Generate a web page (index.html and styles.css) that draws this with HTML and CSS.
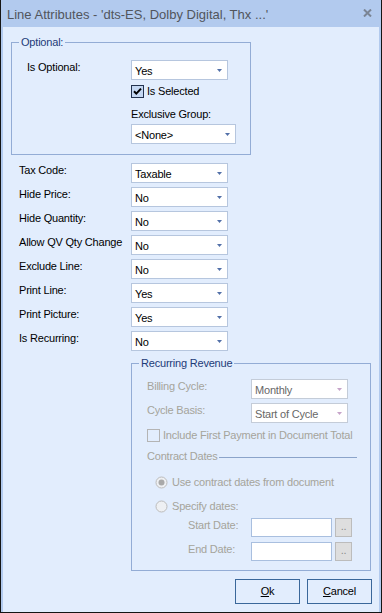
FILE: index.html
```html
<!DOCTYPE html>
<html>
<head>
<meta charset="utf-8">
<link rel="stylesheet" href="styles.css">
</head>
<body>
<div class="window">
  <div class="titlebar">
    <span class="title">Line Attributes - 'dts-ES, Dolby Digital, Thx ...'</span>
    <svg class="close" width="9" height="8" viewBox="0 0 9 8"><path d="M1 0.5 L8 7.5 M8 0.5 L1 7.5" stroke="#7a8494" stroke-width="2" fill="none"/></svg>
  </div>
  <div class="client">
    <fieldset class="group opt">
      <legend>Optional:</legend>
      <div class="opt-body">
        <div class="lbl">Is Optional:</div>
        <div class="stack">
          <div class="combo"><span>Yes</span><svg class="arrow" width="5" height="3" viewBox="0 0 5 3"><path d="M0 0 H5 L2.5 3 Z" fill="#5270a8"/></svg></div>
          <div class="check">
            <svg class="cbox" width="13" height="13" viewBox="0 0 13 13"><rect x="0.5" y="0.5" width="12" height="12" fill="#c5d8f3" stroke="#22324f"/><path d="M3 6.2 L5.3 8.6 L10 3.6" stroke="#000" stroke-width="2" fill="none"/></svg>
            <span>Is Selected</span>
          </div>
          <div class="sublbl">Exclusive Group:</div>
          <div class="combo wide"><span>&lt;None&gt;</span><svg class="arrow" width="5" height="3" viewBox="0 0 5 3"><path d="M0 0 H5 L2.5 3 Z" fill="#5270a8"/></svg></div>
        </div>
      </div>
    </fieldset>

    <div class="rows">
      <div class="row"><div class="lbl main">Tax Code:</div><div class="combo"><span>Taxable</span><svg class="arrow" width="5" height="3" viewBox="0 0 5 3"><path d="M0 0 H5 L2.5 3 Z" fill="#5270a8"/></svg></div></div>
      <div class="row"><div class="lbl main">Hide Price:</div><div class="combo"><span>No</span><svg class="arrow" width="5" height="3" viewBox="0 0 5 3"><path d="M0 0 H5 L2.5 3 Z" fill="#5270a8"/></svg></div></div>
      <div class="row"><div class="lbl main">Hide Quantity:</div><div class="combo"><span>No</span><svg class="arrow" width="5" height="3" viewBox="0 0 5 3"><path d="M0 0 H5 L2.5 3 Z" fill="#5270a8"/></svg></div></div>
      <div class="row"><div class="lbl main">Allow QV Qty Change</div><div class="combo"><span>No</span><svg class="arrow" width="5" height="3" viewBox="0 0 5 3"><path d="M0 0 H5 L2.5 3 Z" fill="#5270a8"/></svg></div></div>
      <div class="row"><div class="lbl main">Exclude Line:</div><div class="combo"><span>No</span><svg class="arrow" width="5" height="3" viewBox="0 0 5 3"><path d="M0 0 H5 L2.5 3 Z" fill="#5270a8"/></svg></div></div>
      <div class="row"><div class="lbl main">Print Line:</div><div class="combo"><span>Yes</span><svg class="arrow" width="5" height="3" viewBox="0 0 5 3"><path d="M0 0 H5 L2.5 3 Z" fill="#5270a8"/></svg></div></div>
      <div class="row"><div class="lbl main">Print Picture:</div><div class="combo"><span>Yes</span><svg class="arrow" width="5" height="3" viewBox="0 0 5 3"><path d="M0 0 H5 L2.5 3 Z" fill="#5270a8"/></svg></div></div>
      <div class="row"><div class="lbl main">Is Recurring:</div><div class="combo"><span>No</span><svg class="arrow" width="5" height="3" viewBox="0 0 5 3"><path d="M0 0 H5 L2.5 3 Z" fill="#5270a8"/></svg></div></div>
    </div>

    <fieldset class="group rec">
      <legend>Recurring Revenue</legend>
      <div class="rec-body">
        <div class="row"><div class="lbl dis">Billing Cycle:</div><div class="combo disabled"><span>Monthly</span><svg class="arrow" width="5" height="3" viewBox="0 0 5 3"><path d="M0 0 H5 L2.5 3 Z" fill="#c6a4c9"/></svg></div></div>
        <div class="row"><div class="lbl dis">Cycle Basis:</div><div class="combo disabled"><span>Start of Cycle</span><svg class="arrow" width="5" height="3" viewBox="0 0 5 3"><path d="M0 0 H5 L2.5 3 Z" fill="#c6a4c9"/></svg></div></div>
        <div class="check dis incl">
          <svg class="cbox" width="13" height="13" viewBox="0 0 13 13"><rect x="0.5" y="0.5" width="12" height="12" fill="none" stroke="#b4b4b4"/></svg>
          <span>Include First Payment in Document Total</span>
        </div>
        <div class="sep"><span class="dis">Contract Dates</span><div class="sepline"></div></div>
        <div class="radio r1">
          <svg width="13" height="13" viewBox="0 0 13 13"><circle cx="6.5" cy="6.5" r="5.5" fill="#eef0f3" stroke="#bcbcbc"/><circle cx="6.5" cy="6.5" r="3" fill="#a9a9a9"/></svg>
          <span class="dis">Use contract dates from document</span>
        </div>
        <div class="radio r2">
          <svg width="13" height="13" viewBox="0 0 13 13"><circle cx="6.5" cy="6.5" r="5.5" fill="#eef0f3" stroke="#bcbcbc"/></svg>
          <span class="dis">Specify dates:</span>
        </div>
        <div class="daterow"><div class="dlbl dis">Start Date:</div><div class="tbox"></div><div class="dots">..</div></div>
        <div class="daterow"><div class="dlbl dis">End Date:</div><div class="tbox"></div><div class="dots">..</div></div>
      </div>
    </fieldset>

    <div class="buttons">
      <div class="btn"><u>O</u>k</div>
      <div class="btn"><u>C</u>ancel</div>
    </div>
  </div>
</div>
</body>
</html>
```

FILE: styles.css
```css
html, body {
  margin: 0;
  padding: 0;
  background: #ffffff;
}
body {
  font-family: "Liberation Sans", Arial, sans-serif;
  font-size: 11px;
  letter-spacing: -0.2px;
  color: #000;
}
.window {
  width: 382px;
  height: 613px;
  box-sizing: border-box;
  border: 1px solid #151515;
  border-top: none;
  background: #b2caee;
  display: flex;
  flex-direction: column;
}
.titlebar {
  height: 27px;
  flex: none;
  box-sizing: border-box;
  padding: 2px 0 0 6px;
  display: flex;
  align-items: flex-start;
}
.title {
  font-size: 13px;
  line-height: 25px;
  letter-spacing: 0;
  color: #51555c;
}
.close {
  margin-left: auto;
  margin-right: 9px;
  margin-top: 7px;
}
.client {
  flex: 1;
  margin: 0 2px;
  background: #e2edfd;
  padding: 9px 0 0 8px;
}
.group {
  margin: 0;
  width: 240px;
  box-sizing: border-box;
  border: 1px solid #93acd5;
  padding: 0;
  min-width: 0;
}
.group legend {
  margin-left: 7px;
  padding: 0 2px;
  line-height: 13px;
  color: #1d3b78;
}
.opt {
  padding: 11px 0 10px 0;
}
.opt-body {
  display: flex;
  align-items: flex-start;
  margin-left: 15px;
}
.lbl {
  width: 104px;
  flex: none;
  line-height: 13px;
  padding-top: 1px;
  white-space: nowrap;
}
.lbl.main {
  width: 112px;
}
.stack {
  display: flex;
  flex-direction: column;
  align-items: flex-start;
}
.combo {
  box-sizing: border-box;
  width: 97px;
  height: 20px;
  border: 1px solid #b6c6de;
  background: #fff;
  padding: 4px 5px 0 3px;
  line-height: 13px;
  display: flex;
  justify-content: space-between;
  align-items: flex-start;
  flex: none;
}
.combo.wide {
  width: 105px;
}
.combo .arrow {
  margin-top: 4px;
}
.combo.disabled {
  border-color: #c4ccd8;
  color: #676767;
}
.check {
  display: flex;
  align-items: flex-start;
  margin-top: 5px;
  line-height: 13px;
}
.check .cbox {
  margin-right: 3px;
  flex: none;
}
.sublbl {
  margin-top: 10px;
  line-height: 13px;
}
.opt .stack .combo.wide {
  margin-top: 3px;
}
.rows {
  margin-top: 8px;
  padding-left: 8px;
  display: flex;
  flex-direction: column;
  gap: 4px;
}
.row {
  display: flex;
  align-items: flex-start;
}
.rec {
  margin-top: 6px;
  margin-left: 120px;
  padding: 9px 0 9px 0;
}
.rec-body {
  display: flex;
  flex-direction: column;
  margin-left: 15px;
}
.rec-body .row + .row {
  margin-top: 4px;
}
.dis {
  color: #a5a49b;
}
.incl {
  margin-top: 6px;
}
.sep {
  margin-top: 8px;
  display: flex;
  align-items: flex-start;
  line-height: 13px;
}
.sepline {
  flex: 1;
  margin: 7px 13px 0 1px;
  border-top: 1px solid #8ba4ca;
}
.radio {
  display: flex;
  align-items: flex-start;
  margin-left: 8px;
  line-height: 13px;
}
.radio svg {
  margin-right: 4px;
  flex: none;
}
.r1 {
  margin-top: 13px;
}
.r2 {
  margin-top: 11px;
}
.daterow {
  display: flex;
  align-items: flex-start;
  margin-top: 5px;
  margin-left: 41px;
}
.dlbl {
  width: 63px;
  line-height: 13px;
  padding-top: 1px;
  flex: none;
}
.tbox {
  width: 81px;
  height: 19px;
  box-sizing: border-box;
  border: 1px solid #a9bfdf;
  background: #fff;
  flex: none;
}
.dots {
  margin-left: 3px;
  width: 17px;
  height: 19px;
  box-sizing: border-box;
  border: 1px solid #bcbcbc;
  background: #dedede;
  color: #8c8c8c;
  text-align: center;
  line-height: 13px;
  padding-top: 1px;
  flex: none;
}
.buttons {
  margin-top: 8px;
  padding-right: 7px;
  display: flex;
  justify-content: flex-end;
  gap: 7px;
}
.btn {
  width: 65px;
  height: 25px;
  box-sizing: border-box;
  border: 1px solid #3a679a;
  display: flex;
  align-items: center;
  justify-content: center;
  line-height: 13px;
}
```
